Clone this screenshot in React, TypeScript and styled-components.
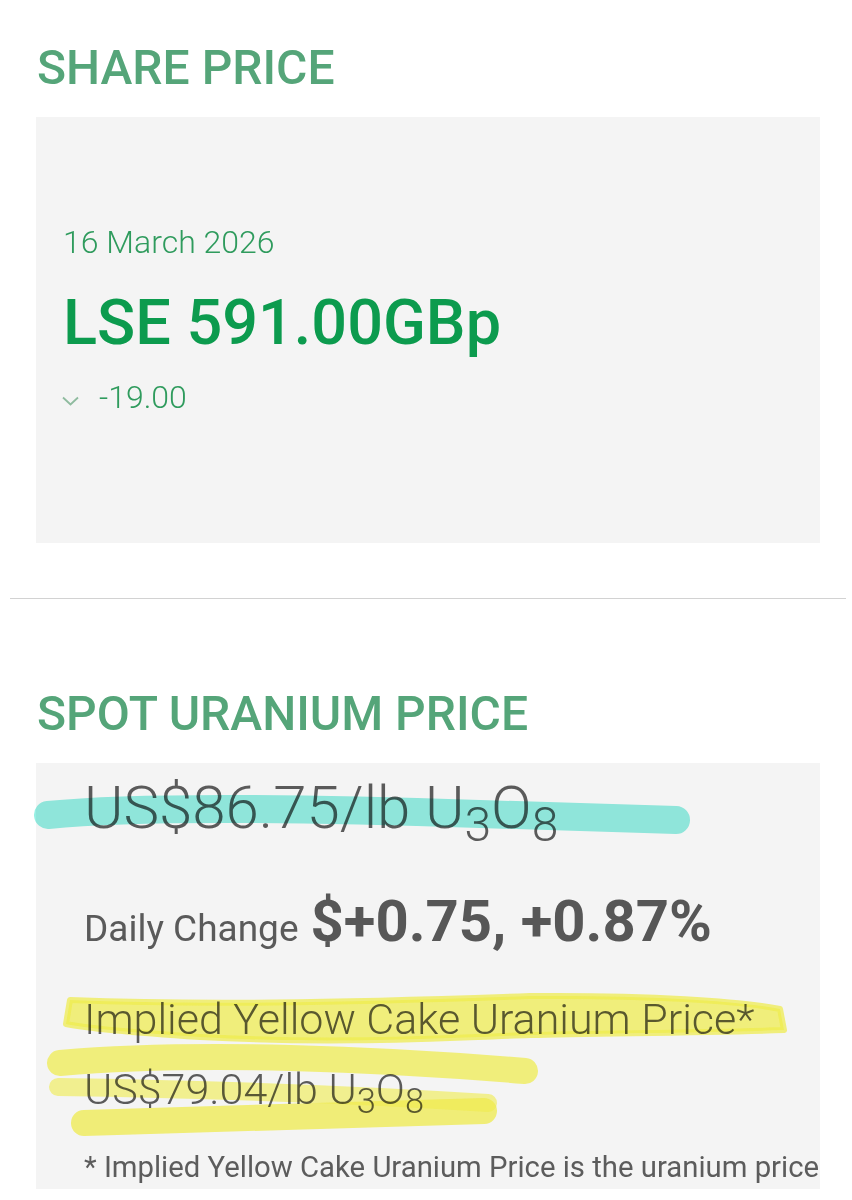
import React from "react";
import styled, { createGlobalStyle } from "styled-components";

const GlobalStyle = createGlobalStyle`
  html, body {
    margin: 0;
    padding: 0;
    background: #ffffff;
  }
  body {
    font-family: Roboto, "Liberation Sans", Arial, sans-serif;
    -webkit-font-smoothing: antialiased;
  }
`;

const Page = styled.div`
  width: 852px;
  display: flex;
  flex-direction: column;
`;

const Section = styled.section<{ $top: number }>`
  display: flex;
  flex-direction: column;
  padding: ${(p) => p.$top}px 32px 0 36px;
`;

const SectionTitle = styled.h2`
  margin: 0 0 21px 1px;
  font-size: 48px;
  line-height: 56px;
  font-weight: 500;
  color: #55a579;
  letter-spacing: 0;
`;

const Card = styled.div<{ $padTop: number; $padLeft: number }>`
  position: relative;
  height: 426px;
  box-sizing: border-box;
  background: #f4f4f4;
  padding: ${(p) => p.$padTop}px 0 0 ${(p) => p.$padLeft}px;
  display: flex;
  flex-direction: column;
`;

const DateText = styled.div`
  font-size: 32px;
  line-height: 37px;
  font-weight: 300;
  color: #2f9b5d;
`;

const LsePrice = styled.div`
  margin-top: 25px;
  font-size: 63px;
  line-height: 74px;
  font-weight: 500;
  color: #0c9b4e;
`;

const ChangeRow = styled.div`
  margin-top: 19px;
  display: flex;
  align-items: center;
  gap: 19px;
  font-size: 32px;
  line-height: 37px;
  font-weight: 300;
  color: #2f9b5d;
`;

const Chevron = styled.svg`
  width: 19px;
  height: 12px;
  margin-left: -2px;
  margin-top: 6px;
  flex: none;
`;

const Divider = styled.hr`
  margin: 55px 6px 0 10px;
  border: none;
  border-top: 1.5px solid #d2d2d2;
  height: 0;
`;

const Line = styled.div<{ $size: number; $lh: number; $weight: number; $mt: number }>`
  position: relative;
  z-index: 0;
  margin-top: ${(p) => p.$mt}px;
  font-size: ${(p) => p.$size}px;
  line-height: ${(p) => p.$lh}px;
  font-weight: ${(p) => p.$weight};
  color: #5a5a5a;
  white-space: nowrap;
`;

const Sub = styled.sub`
  font-size: 0.8em;
  line-height: 0;
  vertical-align: -0.27em;
`;

const DailyLabel = styled.span`
  font-size: 37px;
  font-weight: 400;
  color: #5a5a5a;
  margin-right: 12px;
`;

const DailyValue = styled.span`
  font-size: 58px;
  font-weight: 700;
  color: #575757;
`;

const Footnote = styled.div`
  margin-top: 36px;
  font-size: 29.3px;
  line-height: 34px;
  font-weight: 400;
  color: #5c5c5c;
  white-space: nowrap;
`;

const Marker = styled.svg`
  position: absolute;
  left: 0;
  top: 0;
  width: 784px;
  height: 426px;
  overflow: visible;
  pointer-events: none;
  mix-blend-mode: multiply;
  z-index: 2;
`;

function Formula({ price }: { price: string }) {
  return (
    <>
      {price}/lb U<Sub>3</Sub>O<Sub>8</Sub>
    </>
  );
}

export default function App() {
  return (
    <Page>
      <GlobalStyle />
      <Section $top={40}>
        <SectionTitle>SHARE PRICE</SectionTitle>
        <Card $padTop={107} $padLeft={27}>
          <DateText>16 March 2026</DateText>
          <LsePrice>LSE 591.00GBp</LsePrice>
          <ChangeRow>
            <Chevron viewBox="0 0 19 12">
              <path d="M2 2.5 L9.5 9.5 L17 2.5" fill="none" stroke="#8fbb9f" strokeWidth="1.8" />
            </Chevron>
            <span>-19.00</span>
          </ChangeRow>
        </Card>
      </Section>

      <Divider />

      <Section $top={87}>
        <SectionTitle>SPOT URANIUM PRICE</SectionTitle>
        <Card $padTop={10} $padLeft={48}>
          <Line $size={60} $lh={70} $weight={300} $mt={0}>
            <Formula price="US$86.75" />
          </Line>
          <Line $size={58} $lh={68} $weight={400} $mt={44}>
            <DailyLabel>Daily Change</DailyLabel>
            <DailyValue>$+0.75, +0.87%</DailyValue>
          </Line>
          <Line $size={43} $lh={50} $weight={300} $mt={31}>
            Implied Yellow Cake Uranium Price*
          </Line>
          <Line $size={43} $lh={50} $weight={300} $mt={20}>
            <Formula price="US$79.04" />
          </Line>
          <Footnote>* Implied Yellow Cake Uranium Price is the uranium price</Footnote>
          <Marker viewBox="0 0 784 426">
            <g transform="translate(-36,-764)">
              <path
                d="M48 816 C 150 806, 330 810, 480 815 S 640 820, 676 821"
                fill="none"
                stroke="rgb(150,240,228)"
                strokeWidth="28"
                strokeLinecap="round"
              />
              <path
                d="M70 1001 C 200 1006, 330 1004, 530 997 C 650 996, 740 1002, 780 1010 L 784 1031 C 700 1034, 600 1034, 530 1036 C 420 1040, 330 1045, 200 1038 C 140 1034, 90 1030, 66 1025 Z"
                fill="rgba(250,246,80,0.72)"
                stroke="rgba(250,246,80,0.72)"
                strokeWidth="6"
                strokeLinejoin="round"
              />
              <path
                d="M60 1064 C 200 1052, 380 1060, 525 1072"
                fill="none"
                stroke="rgba(250,246,80,0.72)"
                strokeWidth="26"
                strokeLinecap="round"
              />
              <path
                d="M58 1088 C 200 1090, 360 1096, 488 1104"
                fill="none"
                stroke="rgba(250,246,80,0.6)"
                strokeWidth="18"
                strokeLinecap="round"
              />
              <path
                d="M84 1124 C 220 1120, 360 1115, 484 1112"
                fill="none"
                stroke="rgba(250,246,80,0.75)"
                strokeWidth="26"
                strokeLinecap="round"
              />
            </g>
          </Marker>
        </Card>
      </Section>
    </Page>
  );
}
